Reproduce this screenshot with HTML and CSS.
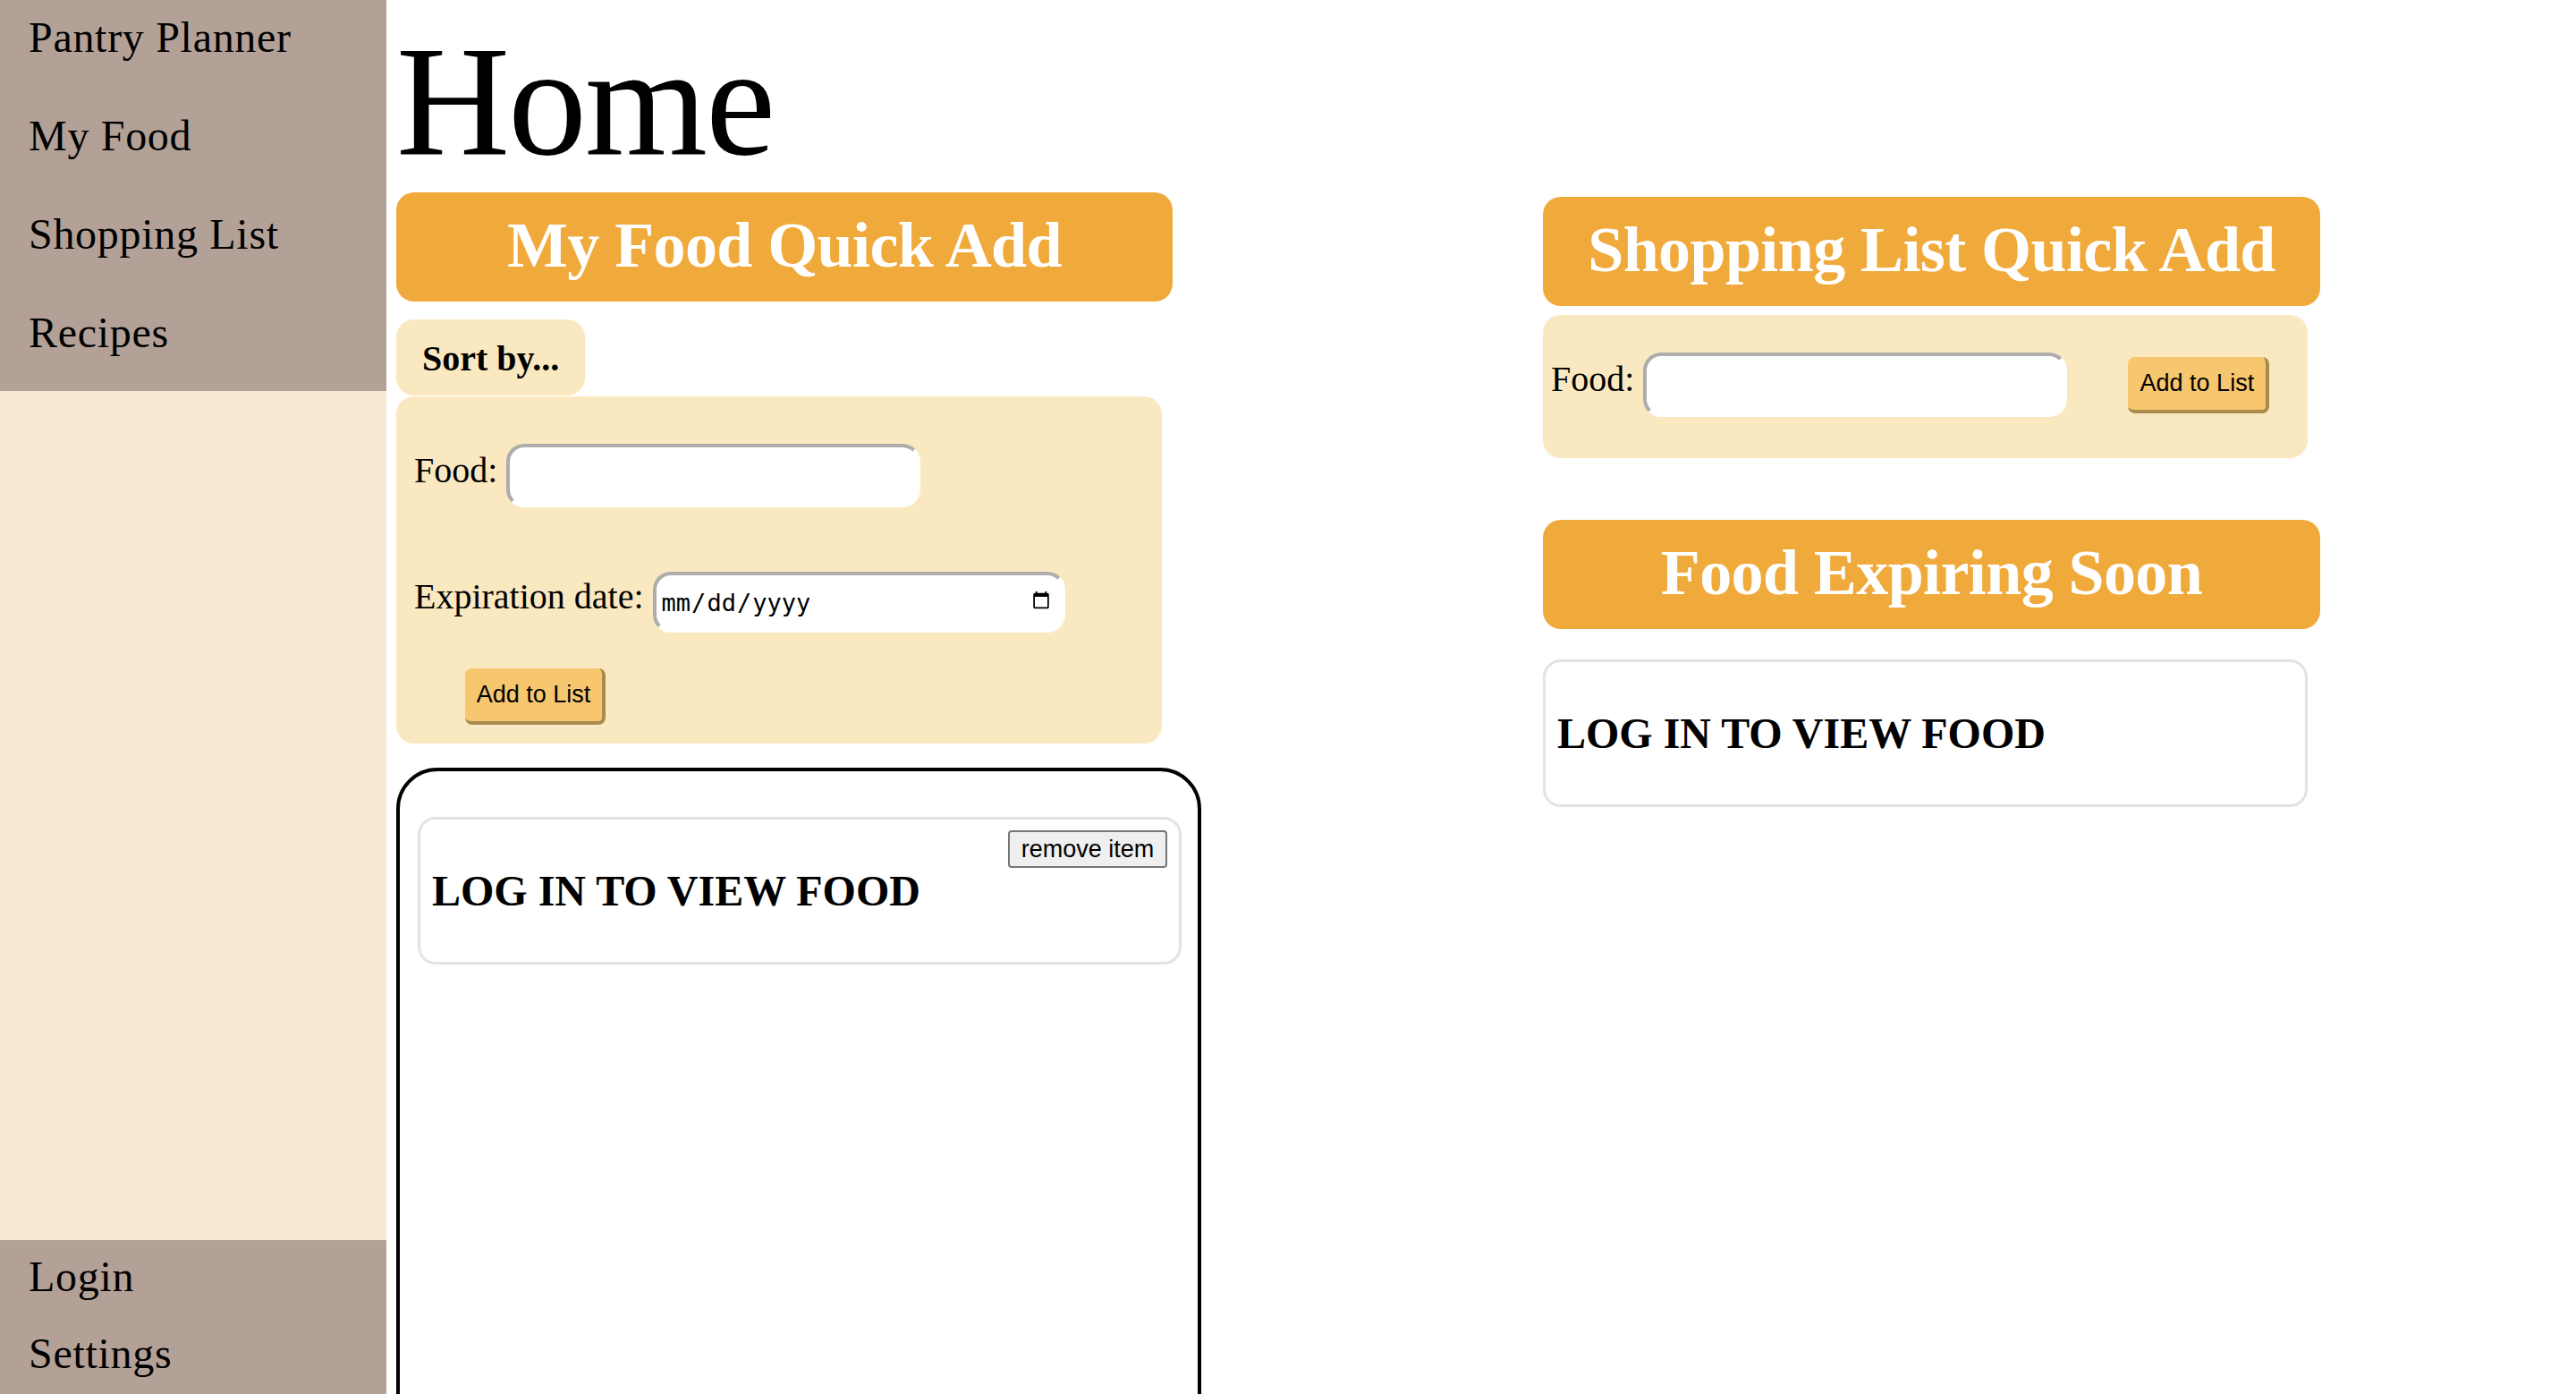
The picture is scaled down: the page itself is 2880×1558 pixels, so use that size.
FILE: index.html
```html
<!DOCTYPE html>
<html lang="en">
<head>
<meta charset="utf-8">
<title>Pantry Planner - Home</title>
<link rel="stylesheet" href="styles.css">
</head>
<body>
<div class="app">
  <aside class="sidebar">
    <nav class="nav-top">
      <a class="nav-link" href="#">Pantry Planner</a>
      <a class="nav-link" href="#">My Food</a>
      <a class="nav-link" href="#">Shopping List</a>
      <a class="nav-link" href="#">Recipes</a>
    </nav>
    <div class="nav-fill"></div>
    <nav class="nav-bottom">
      <a class="nav-link" href="#">Login</a>
      <a class="nav-link" href="#">Settings</a>
    </nav>
  </aside>

  <main class="main">
    <section class="col-left">
      <h1 class="title">Home</h1>
      <h2 class="banner">My Food Quick Add</h2>
      <div class="sort-tab">Sort by...</div>
      <form class="panel panel-myfood">
        <div class="field-row">
          <label class="field-label">Food:</label>
          <input class="text-input food-input" type="text">
        </div>
        <div class="field-row">
          <label class="field-label">Expiration date:</label>
          <input class="text-input date-input" type="date">
        </div>
        <button class="add-btn add-btn-left" type="button">Add to List</button>
      </form>
      <div class="list-box">
        <div class="food-card">
          <button class="remove-btn" type="button">remove item</button>
          <h3 class="card-msg">LOG IN TO VIEW FOOD</h3>
        </div>
      </div>
    </section>

    <section class="col-right">
      <h2 class="banner">Shopping List Quick Add</h2>
      <form class="panel panel-shop">
        <label class="field-label">Food:</label>
        <input class="text-input shop-input" type="text">
        <button class="add-btn add-btn-right" type="button">Add to List</button>
      </form>
      <h2 class="banner banner-expiring">Food Expiring Soon</h2>
      <div class="food-card expiring-card">
        <h3 class="card-msg">LOG IN TO VIEW FOOD</h3>
      </div>
    </section>
  </main>
</div>
</body>
</html>
```

FILE: styles.css
```css
* { box-sizing: border-box; }

html, body {
  margin: 0;
  padding: 0;
  height: 100%;
  overflow: hidden;
  background: #ffffff;
  font-family: "Liberation Serif", "Times New Roman", serif;
  color: #000;
}

.app {
  display: flex;
  height: 1558px;
}

/* ---------- sidebar ---------- */
.sidebar {
  width: 432px;
  flex: 0 0 432px;
  display: flex;
  flex-direction: column;
  height: 1558px;
}

.nav-top {
  height: 437px;
  background: #b3a197;
  padding: 15px 0 0 32px;
  display: flex;
  flex-direction: column;
  gap: 57px;
}

.nav-fill {
  flex: 1;
  background: #f7ead5;
}

.nav-bottom {
  height: 172px;
  background: #b3a197;
  padding: 14px 0 0 32px;
  display: flex;
  flex-direction: column;
  gap: 33px;
}

.nav-link {
  font-size: 48px;
  line-height: 53px;
  letter-spacing: 0.7px;
  color: #000;
  text-decoration: none;
  display: block;
}

/* ---------- main ---------- */
.main {
  flex: 1;
  padding-left: 11px;
  display: grid;
  grid-template-columns: 900px 869px;
  column-gap: 382px;
  align-items: start;
}

.title {
  font-size: 176px;
  font-weight: normal;
  line-height: 195px;
  letter-spacing: -2px;
  margin: 15px 0 5px 0;
}

.banner {
  width: 868px;
  margin: 0;
  background: #f0aa3c;
  border-radius: 20px;
  color: #fff;
  font-size: 72px;
  font-weight: bold;
  line-height: 80px;
  letter-spacing: -0.6px;
  text-align: center;
  padding: 19px 0 23px 0;
}

.sort-tab {
  display: inline-block;
  margin-top: 20px;
  background: #fae8c0;
  border-radius: 20px;
  font-size: 40px;
  font-weight: bold;
  line-height: 44px;
  padding: 22px 29px 19px 29px;
}

.panel {
  background: #fae8c0;
  border-radius: 20px;
  margin: 0;
}

.panel-myfood {
  width: 856px;
  padding: 53px 20px 21px 20px;
  display: flex;
  flex-direction: column;
  align-items: flex-start;
  margin-top: 1px;
}

.field-row {
  display: flex;
  align-items: center;
  gap: 10px;
}

.field-row + .field-row { margin-top: 72px; }

.field-label {
  font-size: 40px;
  line-height: 44px;
  padding-bottom: 12px;
}

.text-input {
  border-style: solid;
  border-width: 4px;
  border-color: #adadad #ffffff #ffffff #adadad;
  border-radius: 20px;
  background: #fff;
  outline: none;
  margin: 0;
}

.food-input {
  width: 463px;
  height: 71px;
}

.date-input {
  width: 461px;
  height: 68px;
  font-family: "DejaVu Sans Mono", "Liberation Mono", monospace;
  font-size: 27px;
  color: #000;
  padding: 0 12px 0 5px;
}

.date-input::-webkit-calendar-picker-indicator {
  width: 22px;
  height: 26px;
  padding: 0;
  margin: 0;
}

.add-btn {
  background: #f6c76e;
  border-style: solid;
  border-width: 0 4px 4px 0;
  border-color: #a98a4f;
  border-radius: 8px;
  font-family: "Liberation Sans", Arial, sans-serif;
  font-size: 27px;
  color: #000;
  height: 63px;
  width: 157px;
  padding: 0;
  text-align: center;
}

.add-btn-left {
  margin: 40px 0 0 57px;
}

.list-box {
  margin-top: 27px;
  width: 900px;
  height: 800px;
  border: 4px solid #000;
  border-radius: 46px;
  padding: 51px 18px 0 20px;
}

.food-card {
  border: 3px solid #e3e3e6;
  border-radius: 20px;
  padding: 13px 13px;
  background: #fff;
}

.remove-btn {
  float: right;
  width: 178px;
  height: 42px;
  margin-top: -1px;
  background: #efefef;
  border: 2px solid #767676;
  border-radius: 4px;
  font-family: "Liberation Sans", Arial, sans-serif;
  font-size: 27px;
  color: #000;
  padding: 0;
}

.card-msg {
  margin: 40px 0;
  font-size: 48px;
  font-weight: bold;
  line-height: 53px;
}

/* ---------- right column ---------- */
.col-right {
  padding-top: 220px;
}

.col-right .banner { width: 869px; }

.panel-shop {
  margin-top: 10px;
  width: 855px;
  height: 160px;
  padding: 0 9px 4px 9px;
  display: flex;
  align-items: center;
}

.panel-shop .field-label { margin-right: 10px; }

.shop-input {
  width: 474px;
  height: 72px;
}

.add-btn-right {
  margin-left: 68px;
  width: 158px;
}

.banner-expiring {
  margin-top: 69px;
}

.expiring-card {
  margin-top: 34px;
  width: 855px;
}
```
